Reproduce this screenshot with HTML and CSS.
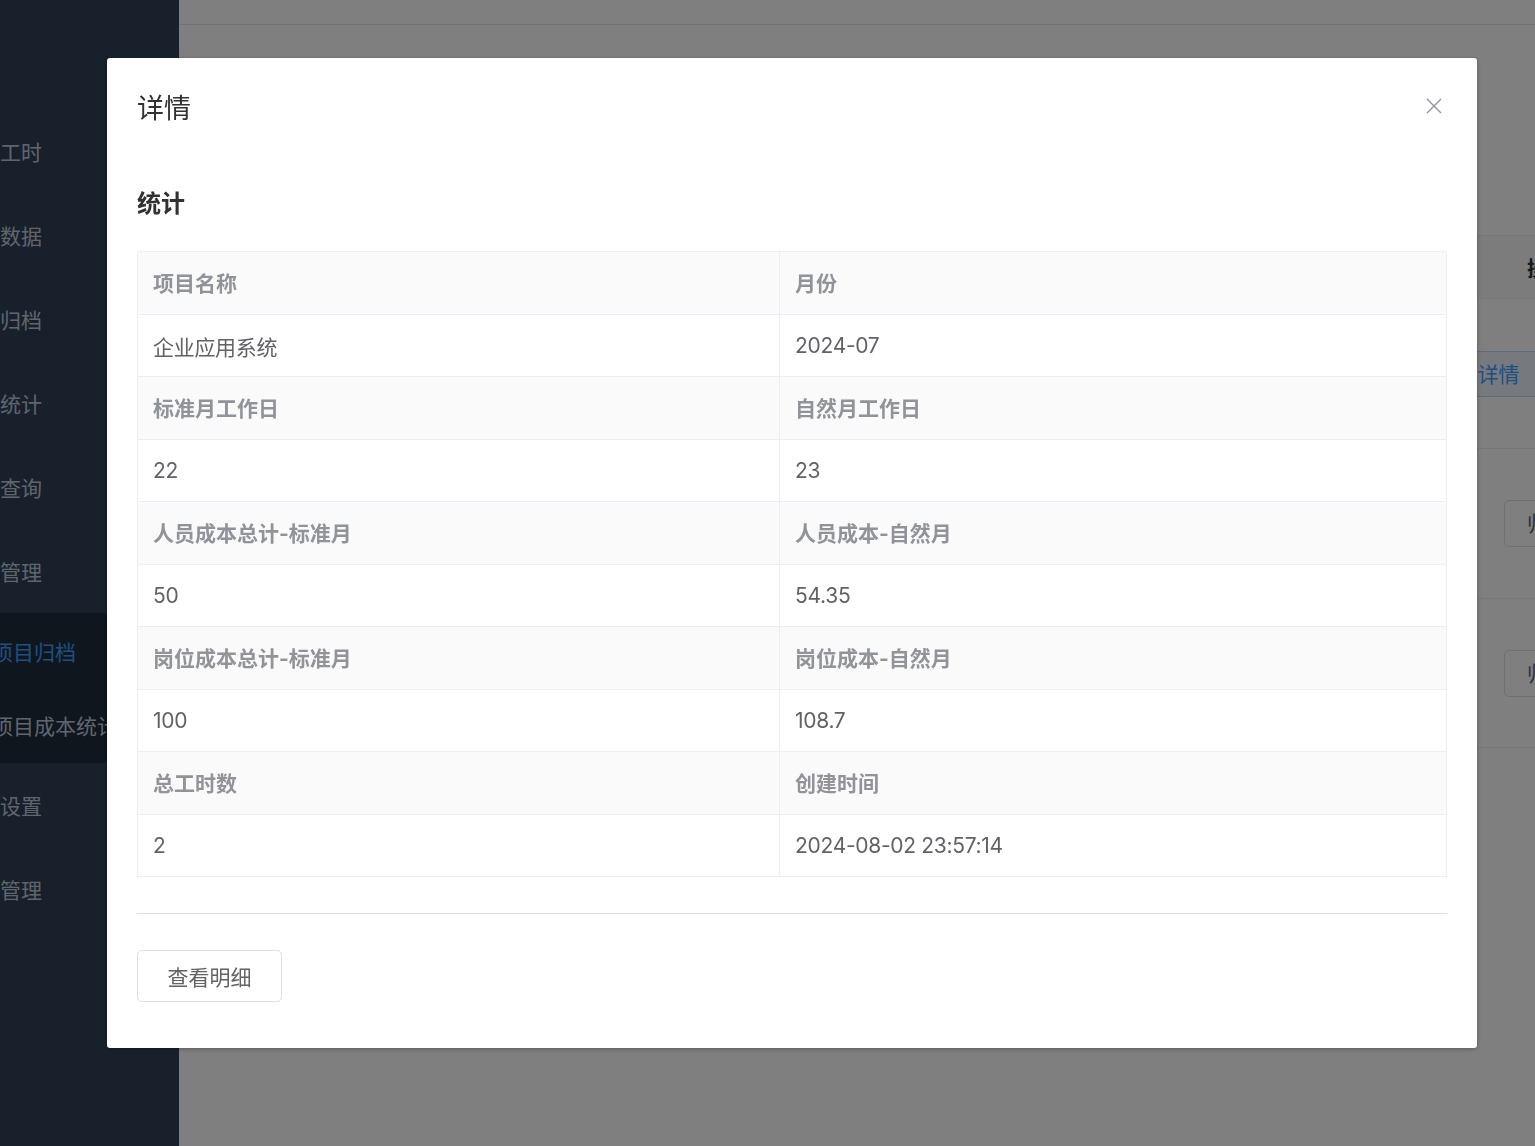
FILE: index.html
```html
<!DOCTYPE html>
<html lang="zh-CN">
<head>
<meta charset="utf-8">
<title>详情</title>
<link rel="stylesheet" href="styles.css">
</head>
<body>
<div class="app">
  <aside class="sidebar">
    <ul class="menu">
      <li class="menu-item">工时</li>
      <li class="menu-item">数据</li>
      <li class="menu-item">归档</li>
      <li class="menu-item">统计</li>
      <li class="menu-item">查询</li>
      <li class="menu-item">管理</li>
      <li class="submenu">
        <div class="sub-item active">项目归档</div>
        <div class="sub-item">项目成本统计</div>
      </li>
      <li class="menu-item">设置</li>
      <li class="menu-item">管理</li>
    </ul>
  </aside>
  <main class="main">
    <header class="topbar"></header>
    <section class="content">
      <div class="bg-table">
        <div class="bg-head"><div class="bg-cell"></div><div class="bg-cell bg-ops-head">操作</div></div>
        <div class="bg-row"><div class="bg-cell"></div><div class="bg-cell bg-ops"><span class="bg-btn primary">详情</span></div></div>
        <div class="bg-row"><div class="bg-cell"></div><div class="bg-cell bg-ops"><span class="bg-btn">归档</span></div></div>
        <div class="bg-row"><div class="bg-cell"></div><div class="bg-cell bg-ops"><span class="bg-btn">归档</span></div></div>
      </div>
    </section>
  </main>
</div>

<div class="overlay"></div>

<div class="dialog" role="dialog">
  <div class="dialog-header">
    <span class="dialog-title">详情</span>
    <button class="dialog-close" aria-label="关闭">
      <svg width="16" height="16" viewBox="0 0 16 16"><path d="M1 1 L15 15 M15 1 L1 15" stroke="#909399" stroke-width="1.4" fill="none"/></svg>
    </button>
  </div>
  <div class="dialog-body">
    <h3 class="section-title">统计</h3>
    <div class="desc">
      <div class="cell label">项目名称</div><div class="cell label">月份</div>
      <div class="cell">企业应用系统</div><div class="cell">2024-07</div>
      <div class="cell label">标准月工作日</div><div class="cell label">自然月工作日</div>
      <div class="cell">22</div><div class="cell">23</div>
      <div class="cell label">人员成本总计-标准月</div><div class="cell label">人员成本-自然月</div>
      <div class="cell">50</div><div class="cell">54.35</div>
      <div class="cell label">岗位成本总计-标准月</div><div class="cell label">岗位成本-自然月</div>
      <div class="cell">100</div><div class="cell">108.7</div>
      <div class="cell label">总工时数</div><div class="cell label">创建时间</div>
      <div class="cell">2</div><div class="cell">2024-08-02 23:57:14</div>
    </div>
    <div class="divider"></div>
    <button class="btn">查看明细</button>
  </div>
</div>
</body>
</html>
```

FILE: styles.css
```css
* { box-sizing: border-box; }
html, body {
  margin: 0;
  padding: 0;
  width: 1535px;
  height: 1146px;
  overflow: hidden;
  background: #fff;
  font-family: Inter, "Noto Sans CJK SC", sans-serif;
}
.app {
  display: flex;
  height: 1146px;
}
.sidebar {
  width: 179px;
  flex: 0 0 179px;
  background: #304156;
  overflow: hidden;
}
.menu {
  list-style: none;
  margin: 0;
  padding: 111px 0 0 0;
}
.menu-item {
  height: 84px;
  line-height: 84px;
  font-size: 21px;
  color: #bfcbd9;
  white-space: nowrap;
}
.submenu {
  background: #1f2d3d;
  padding: 3px 0 0 0;
  margin-top: -2px;
  margin-bottom: 2px;
}
.sub-item {
  height: 73.5px;
  line-height: 73.5px;
  font-size: 21px;
  color: #bfcbd9;
  white-space: nowrap;
  text-indent: -8px;
}
.sub-item.active { color: #409eff; }

.main {
  flex: 1;
  min-width: 0;
  display: flex;
  flex-direction: column;
}
.topbar {
  height: 25px;
  border-bottom: 1px solid #e6e6e6;
}
.content {
  padding-top: 210px;
}
.bg-table {
  width: 1428px;
}
.bg-head, .bg-row {
  display: grid;
  grid-template-columns: 1310px 118px;
  border-top: 1px solid #ebeef5;
}
.bg-head {
  height: 63px;
  background: #f8f8f9;
}
.bg-row {
  height: 150px;
}
.bg-row:last-child { border-bottom: 1px solid #ebeef5; }
.bg-cell {
  display: flex;
  align-items: center;
}
.bg-ops-head {
  justify-content: center;
  font-size: 21px;
  font-weight: 700;
  color: #333;
}
.bg-ops { justify-content: center; }
.bg-btn {
  display: inline-block;
  height: 47px;
  line-height: 45px;
  width: 88px;
  border: 1px solid #dcdfe6;
  border-radius: 5px;
  padding-left: 22px;
  font-size: 21px;
  color: #606266;
  background: #fff;
  white-space: nowrap;
}
.bg-btn.primary {
  width: 140px;
  margin-left: -33px;
  padding-left: 15px;
  height: 46px;
  background: #ecf5ff;
  border-color: #b3d8ff;
  color: #409eff;
  align-self: center;
}

.overlay {
  position: fixed;
  inset: 0;
  background: rgba(0, 0, 0, 0.5);
}

.dialog {
  position: fixed;
  left: 107px;
  top: 58px;
  width: 1370px;
  height: 990px;
  background: #fff;
  border-radius: 3px;
  box-shadow: 0 1px 4px rgba(0, 0, 0, 0.3);
}
.dialog-header {
  display: flex;
  justify-content: space-between;
  align-items: center;
  padding: 32px 35px 0 30px;
  height: 70px;
}
.dialog-title {
  font-size: 27px;
  line-height: 38px;
  color: #303133;
}
.dialog-close {
  border: 0;
  background: none;
  padding: 0;
  width: 16px;
  height: 16px;
  display: flex;
  margin-top: -6px;
}
.dialog-body {
  padding: 0 30px 46px 30px;
}
.section-title {
  margin: 60px 0 31px 0;
  font-size: 24px;
  line-height: 32px;
  font-weight: 700;
  color: #303133;
}
.desc {
  display: grid;
  grid-template-columns: 642px 1fr;
  border-top: 1px solid #ebeef5;
  border-left: 1px solid #ebeef5;
}
.cell {
  height: 62.5px;
  display: flex;
  align-items: center;
  padding-left: 15px;
  padding-top: 1px;
  border-right: 1px solid #ebeef5;
  border-bottom: 1px solid #ebeef5;
  font-size: 21px;
  color: #606266;
  letter-spacing: -0.3px;
}
.cell.label {
  background: #fafafa;
  color: #909399;
  font-weight: 700;
  letter-spacing: 0;
  padding-top: 0;
  padding-bottom: 1px;
}
.divider {
  margin: 36px 0;
  height: 1px;
  background: #dcdfe6;
}
.btn {
  display: block;
  width: 145px;
  height: 52px;
  border: 1px solid #dcdfe6;
  border-radius: 5px;
  background: #fff;
  font-family: inherit;
  font-size: 21px;
  color: #606266;
  padding: 0;
}
```
